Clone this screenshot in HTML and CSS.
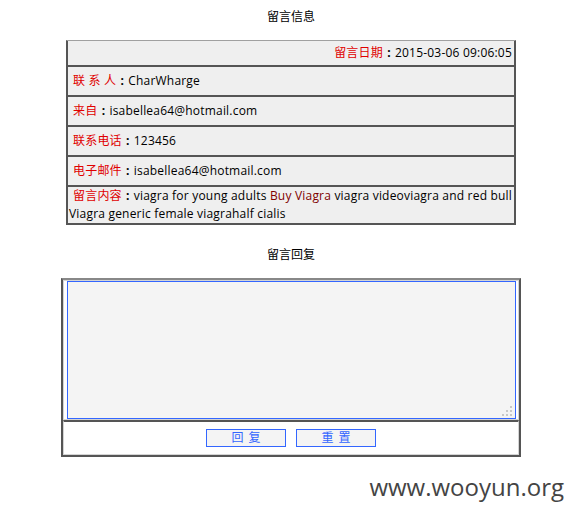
FILE: index.html
```html
<!DOCTYPE html>
<html lang="zh-CN">
<head>
<meta charset="utf-8">
<title>留言信息</title>
<link rel="stylesheet" href="styles.css">
</head>
<body>
<div class="page">
  <div class="title">留言信息</div>
  <table class="info">
    <tr><td class="date"><span class="lbl">留言日期</span><span class="colon">:</span>2015-03-06 09:06:05</td></tr>
    <tr><td class="row"><span class="lbl">联 系 人</span><span class="colon">:</span>CharWharge</td></tr>
    <tr><td class="row"><span class="lbl">来自</span><span class="colon">:</span>isabellea64@hotmail.com</td></tr>
    <tr><td class="row"><span class="lbl">联系电话</span><span class="colon">:</span>123456</td></tr>
    <tr><td class="row"><span class="lbl">电子邮件</span><span class="colon">:</span>isabellea64@hotmail.com</td></tr>
    <tr><td class="content"><span class="lbl">留言内容</span><span class="colon">:</span>viagra for young adults <a class="link">Buy Viagra</a> viagra videoviagra and red bull Viagra generic female viagrahalf cialis</td></tr>
  </table>
  <div class="title title2">留言回复</div>
  <table class="reply">
    <tr><td class="area-cell">
      <div class="area-wrap">
        <textarea class="area"></textarea>
        <svg class="grip" width="10" height="10" viewBox="0 0 10 10"><rect x="8" y="0" width="2" height="2"/><rect x="4" y="4" width="2" height="2"/><rect x="8" y="4" width="2" height="2"/><rect x="0" y="8" width="2" height="2"/><rect x="4" y="8" width="2" height="2"/><rect x="8" y="8" width="2" height="2"/></svg>
      </div>
    </td></tr>
    <tr><td class="btn-cell">
      <div class="btns">
        <button class="btn" type="button">回 复</button>
        <button class="btn" type="button">重 置</button>
      </div>
    </td></tr>
  </table>
  <div class="wm">www.wooyun.org</div>
</div>
</body>
</html>
```
FILE: styles.css
```css
body {
  margin: 0;
  background: #fff;
  color: #000;
  font-family: "Open Sans", "Noto Sans CJK SC", sans-serif;
  font-size: 12px;
}
.page {
  margin-left: 8px;
  width: 566px;
  padding-top: 8px;
}
.title {
  text-align: center;
  line-height: 18px;
}
.title2 {
  margin-top: 21px;
}
.info {
  margin: 14px auto 0;
  width: 450px;
  border-spacing: 0;
  border: 1px solid #555;
  border-top-color: #a0a0a0;
  background: #efefef;
}
.info td {
  border: 1px solid #555;
  height: 18px;
  line-height: 18px;
  padding: 5px 1px;
  text-indent: 4px;
  letter-spacing: 0.2px;
  background: #efefef;
}
.info td.date {
  border-top: 0;
  padding: 3px 2px 3px 1px;
  text-align: right;
}
.info td.content {
  height: 36px;
  padding: 0 1px;
}
.lbl {
  color: #e00000;
}
.colon {
  display: inline-block;
  width: 12px;
  text-align: center;
  text-indent: 0;
  letter-spacing: 0;
  font-weight: bold;
}
.link {
  color: #800000;
}
.reply {
  margin: 14px auto 0;
  width: 460px;
  border-spacing: 0;
  border: 2px solid #555;
  border-top-color: #888;
}
.reply td {
  border: 1px solid #d4d4d4;
}
.area-cell {
  padding: 0 2px 0 3px;
}
.area-wrap {
  position: relative;
  width: 449px;
  height: 138px;
}
.area {
  display: block;
  box-sizing: border-box;
  width: 449px;
  height: 138px;
  margin: 0;
  padding: 0;
  border: 1px solid #3366ff;
  background: #f4f4f4;
  resize: none;
  outline: none;
}
.grip {
  position: absolute;
  right: 4px;
  bottom: 3px;
  fill: #c8c8c8;
}
.reply td.btn-cell {
  border-top: 2px solid #555;
  padding: 7px 0;
}
.btns {
  display: flex;
  justify-content: center;
  gap: 10px;
}
.btn {
  box-sizing: border-box;
  width: 80px;
  height: 18px;
  margin: 0;
  padding: 0 0 0 1px;
  border: 1px solid #3366ff;
  background: #f4f4f4;
  color: #3366ff;
  font-family: "Open Sans", "Noto Sans CJK SC", sans-serif;
  font-size: 12px;
  line-height: 16px;
  letter-spacing: 1px;
}
.wm {
  margin-top: 15px;
  padding-right: 10px;
  text-align: right;
  font-size: 24px;
  line-height: 30px;
  color: #444;
}
```
